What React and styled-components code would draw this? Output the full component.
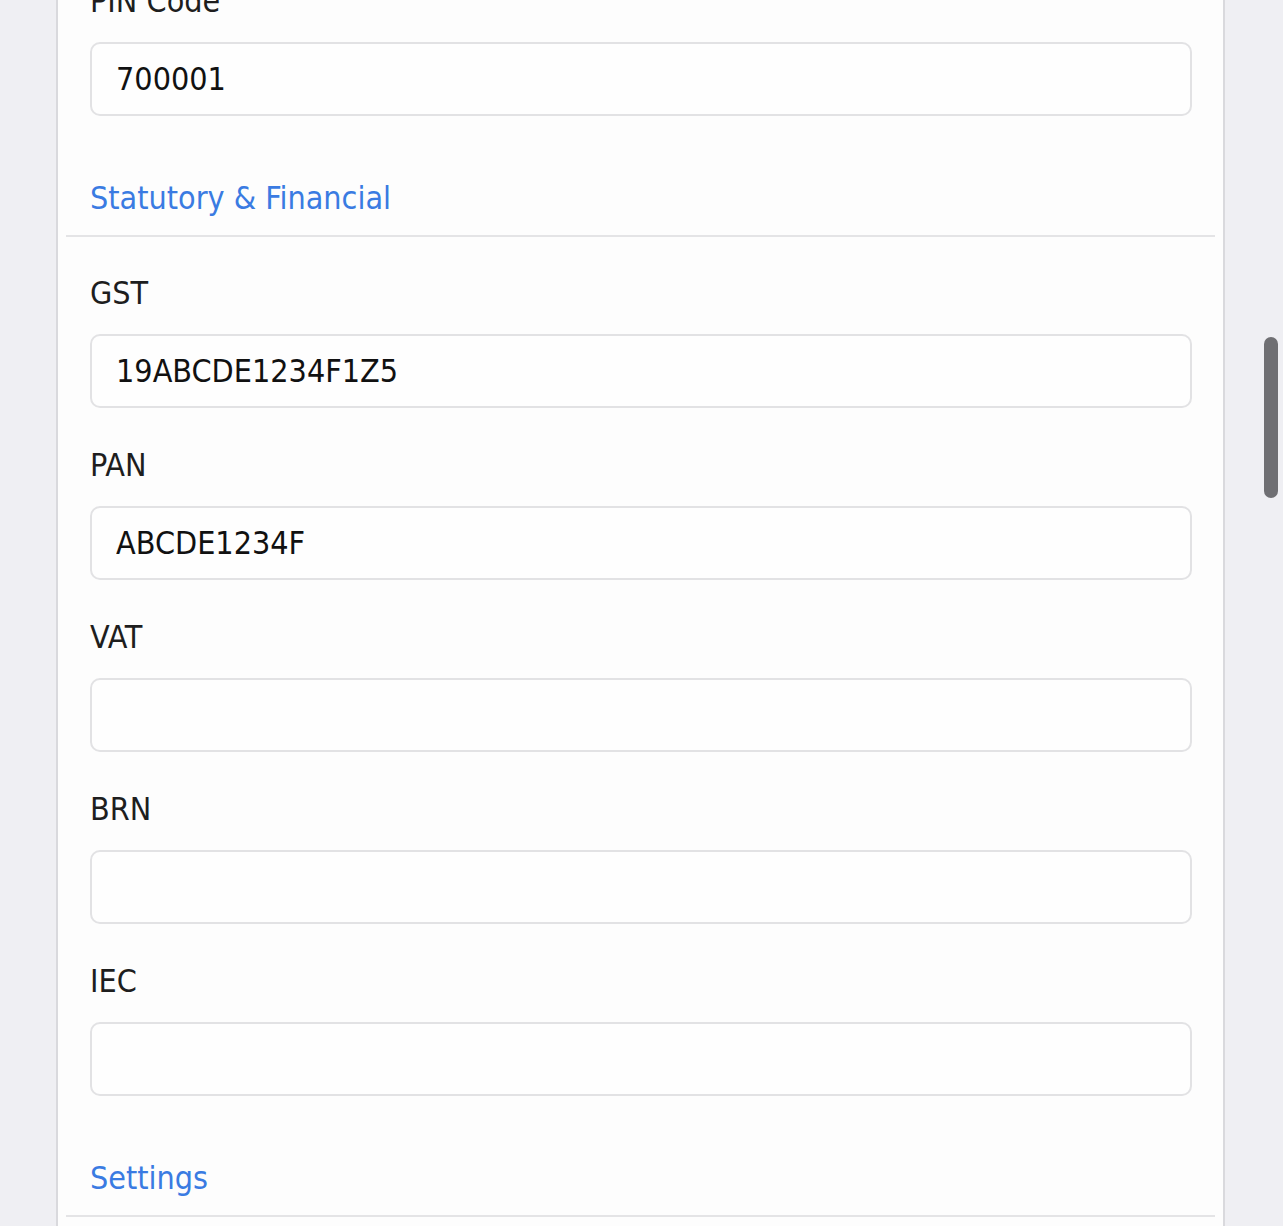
import React from 'react';
import styled, { createGlobalStyle } from 'styled-components';

const GlobalStyle = createGlobalStyle`
  html, body {
    margin: 0;
    padding: 0;
    background: #efeff3;
    overflow: hidden;
  }
  * {
    box-sizing: border-box;
  }
`;

const Page = styled.div`
  height: 1226px;
  overflow: hidden;
  padding-left: 56px;
  font-family: "DejaVu Sans Condensed", "DejaVu Sans", sans-serif;
  font-stretch: condensed;
`;

const Card = styled.div`
  width: 1169px;
  margin-top: -19px;
  background: #fdfdfd;
  border-left: 2px solid #d9d9dd;
  border-right: 2px solid #d9d9dd;
  padding-bottom: 40px;
`;

const SectionHeader = styled.div`
  margin: 0 8px;
  padding: 25px 0 17px 24px;
  border-bottom: 2px solid #e4e4e6;
  color: #3a7be2;
  font-size: 32px;
  line-height: 40px;
`;

const Fields = styled.div`
  padding: ${(p) => (p.$first ? '0' : '36px')} 31px 0 32px;
`;

const Field = styled.div`
  display: flex;
  flex-direction: column;
  margin-bottom: 37px;
`;

const Label = styled.label`
  font-size: 32px;
  line-height: 40px;
  color: #1e1e1e;
  margin-bottom: 21px;
`;

const Input = styled.input`
  height: 74px;
  width: 100%;
  padding: 0 24px;
  border: 2px solid #e2e2e4;
  border-radius: 10px;
  background: #fefefe;
  font-family: inherit;
  font-stretch: condensed;
  font-size: 32px;
  color: #111;
  outline: none;
`;

const ScrollThumb = styled.div`
  position: fixed;
  top: 337px;
  right: 5px;
  width: 14px;
  height: 161px;
  border-radius: 7px;
  background: #6f6f73;
`;

const addressFields = [{ label: 'PIN Code', value: '700001' }];

const statutoryFields = [
  { label: 'GST', value: '19ABCDE1234F1Z5' },
  { label: 'PAN', value: 'ABCDE1234F' },
  { label: 'VAT', value: '' },
  { label: 'BRN', value: '' },
  { label: 'IEC', value: '' },
];

function FieldList({ items, first }) {
  return (
    <Fields $first={first}>
      {items.map((f) => (
        <Field key={f.label}>
          <Label>{f.label}</Label>
          <Input type="text" defaultValue={f.value} />
        </Field>
      ))}
    </Fields>
  );
}

export default function App() {
  return (
    <>
      <GlobalStyle />
      <Page>
        <Card>
          <FieldList items={addressFields} first />
          <SectionHeader>Statutory &amp; Financial</SectionHeader>
          <FieldList items={statutoryFields} />
          <SectionHeader>Settings</SectionHeader>
        </Card>
      </Page>
      <ScrollThumb />
    </>
  );
}
